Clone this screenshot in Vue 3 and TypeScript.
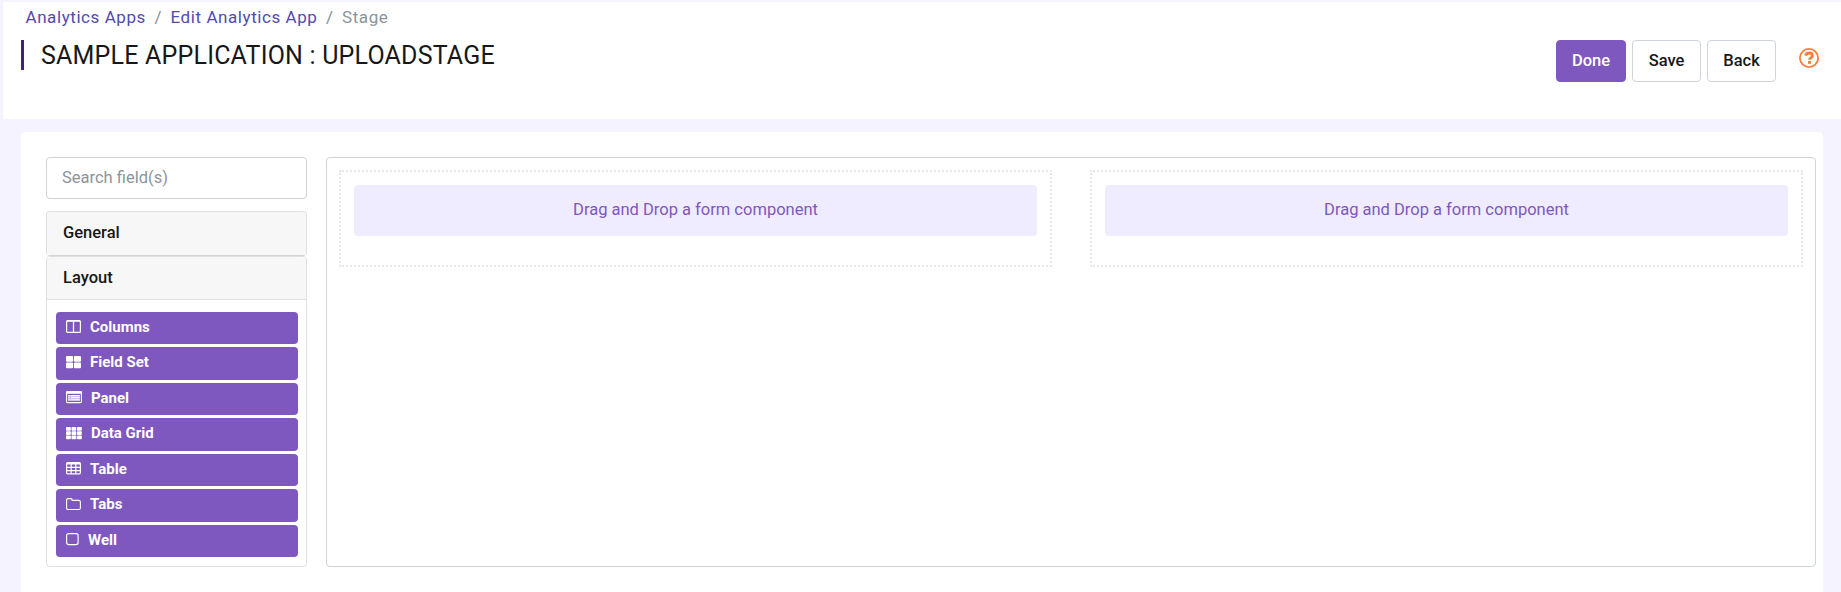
<script setup lang="ts">
interface LayoutItem {
  label: string
  icon: string
  width: number
}

const layoutItems: LayoutItem[] = [
  { label: 'Columns', icon: 'columns', width: 15 },
  { label: 'Field Set', icon: 'fieldset', width: 15 },
  { label: 'Panel', icon: 'panel', width: 16 },
  { label: 'Data Grid', icon: 'grid', width: 16 },
  { label: 'Table', icon: 'table', width: 15 },
  { label: 'Tabs', icon: 'folder', width: 15 },
  { label: 'Well', icon: 'well', width: 13 },
]
const dropZones: string[] = ['left', 'right']
</script>

<template>
  <div class="page">
    <header class="header">
      <div class="heading">
        <nav class="crumbs">
          <a class="link">Analytics Apps</a><span class="sep">/</span><a class="link">Edit Analytics App</a><span class="sep">/</span><span class="current">Stage</span>
        </nav>
        <h1 class="title"><span class="title-text">SAMPLE APPLICATION : UPLOADSTAGE</span></h1>
      </div>
      <div class="actions">
        <button class="btn primary">Done</button>
        <button class="btn">Save</button>
        <button class="btn">Back</button>
        <svg class="help" width="20" height="20" viewBox="0 0 20 20" fill="none" stroke="#fb7d3b">
          <circle cx="10" cy="10" r="9.1" stroke-width="1.8" />
          <path d="M6.6 7.6C7 5.9 8.3 5 10 5c2 0 3.4 1.1 3.4 2.7 0 2.2-2.9 2-2.9 4.1" stroke-width="2.8" />
          <path d="M9 13h3v2.8H9z" fill="#fb7d3b" stroke="none" />
        </svg>
      </div>
    </header>

    <main class="card">
      <aside class="sidebar">
        <input class="search" type="text" placeholder="Search field(s)" />
        <div class="group general"><div class="group-title">General</div></div>
        <div class="group layout">
          <div class="group-title">Layout</div>
          <div class="items">
            <div v-for="item in layoutItems" :key="item.label" class="item">
              <svg class="icon" :width="item.width" height="15" :viewBox="`0 0 ${item.width} 15`" fill="none" stroke="#fff">
                <template v-if="item.icon === 'columns'">
                  <rect x=".6" y="1.6" width="13.8" height="11.8" rx="1" stroke-width="1.2" />
                  <path d="M1 2h13M7.5 2v11" stroke-width="1.3" />
                </template>
                <g v-else-if="item.icon === 'fieldset'" fill="#fff" stroke="none">
                  <rect x="0" y="1" width="7.1" height="5.8" rx="1" /><rect x="7.9" y="1" width="7.1" height="5.8" rx="1" />
                  <rect x="0" y="7.5" width="7.1" height="5.8" rx="1" /><rect x="7.9" y="7.5" width="7.1" height="5.8" rx="1" />
                </g>
                <template v-else-if="item.icon === 'panel'">
                  <rect x=".6" y="1.6" width="14.8" height="11" rx=".8" stroke-width="1.1" />
                  <path d="M0 1.5h16v2.3H0z" fill="#fff" stroke="none" />
                  <path d="M2.3 5.6h1.5M4.7 5.6h9M2.3 7.7h1.5M4.7 7.7h9M2.3 9.8h1.5M4.7 9.8h9" stroke-width="1.1" />
                  <path d="M2 5h12v6H2z" fill="#fff" fill-opacity=".55" stroke="none" />
                </template>
                <g v-else-if="item.icon === 'grid'" fill="#fff" stroke="none">
                  <template v-for="row in 3" :key="row">
                    <rect v-for="col in 3" :key="col" :x="(col - 1) * 5.5" :y="row * 4.3 - 3.3" width="4.8" height="3.7" rx=".7" />
                  </template>
                </g>
                <template v-else-if="item.icon === 'table'">
                  <rect x=".6" y="1.6" width="13.8" height="11.2" rx="1" stroke-width="1.2" />
                  <path d="M1 2.5h13" stroke-width="2" />
                  <path d="M1 6.3h13M1 9.6h13M5.2 3v10M9.8 3v10" stroke-width="1.2" />
                </template>
                <path v-else-if="item.icon === 'folder'" d="M.6 3.2Q.6 1.6 2.2 1.6h2.6Q6.2 1.6 6.2 3.4h6.6q1.6 0 1.6 1.5v6q0 1.6-1.6 1.6H2.2Q.6 12.5.6 10.9z" stroke-width="1.1" />
                <rect v-else x=".6" y="1.6" width="11.5" height="11" rx="2" stroke-width="1.2" />
              </svg>
              <span>{{ item.label }}</span>
            </div>
          </div>
        </div>
      </aside>

      <section class="canvas">
        <div v-for="zone in dropZones" :key="zone" class="zone">
          <div class="drop"><span>Drag and Drop a form component</span></div>
        </div>
      </section>
    </main>
  </div>
</template>

<style>
body {
  background: #f5f3ff;
  overflow: hidden;
}
</style>

<style scoped>
* {
  box-sizing: border-box;
}
.page {
  height: 592px;
  padding-top: 2px;
  display: flex;
  flex-direction: column;
  font-family: Roboto, "Liberation Sans", sans-serif;
  font-size: 16px;
  color: #171717;
  background: #f5f3ff;
}
.header {
  height: 117px;
  flex: none;
  margin-left: 3px;
  padding: 0 22px 0 18px;
  display: flex;
  justify-content: space-between;
  background: #fff;
}
.crumbs {
  height: 30px;
  margin: 0 0 8px 4.5px;
  display: flex;
  line-height: 30px;
  font-size: 17px;
  letter-spacing: 0.57px;
  white-space: pre;
}
.link {
  color: #534ab0;
}
.sep {
  margin: 0 8.5px;
  color: #868e96;
}
.current {
  color: #8c949b;
}
.title {
  height: 30px;
  margin: 0;
  padding-left: 17px;
  border-left: 3px solid #3d2383;
  font-weight: 400;
  font-size: 25px;
  line-height: 32px;
  letter-spacing: 0.2px;
  white-space: nowrap;
}
.actions {
  display: flex;
  gap: 6px;
  padding-top: 38px;
}
.btn {
  width: 69px;
  height: 42px;
  padding: 0;
  border: 1px solid #ced4da;
  border-radius: 4px;
  background: #fff;
  color: #171717;
  font: 500 16.5px/40px Roboto, sans-serif;
}
.btn.primary {
  width: 70px;
  border-color: #7e57bf;
  background: #7e57bf;
  color: #fff;
}
.help {
  margin: 8px 0 0 17px;
}
.card {
  flex: 1;
  margin: 13px 18px 0 21px;
  padding: 25px 7px 25px 25px;
  display: flex;
  gap: 19px;
  background: #fff;
  border-radius: 4px 4px 0 0;
}
.sidebar {
  width: 261px;
  flex: none;
  display: flex;
  flex-direction: column;
}
.search {
  width: 100%;
  height: 42px;
  flex: none;
  margin-bottom: 12px;
  padding: 0 15px 2px;
  border: 1px solid #ced4da;
  border-radius: 4px;
  font: 400 16.5px Roboto, sans-serif;
  outline: none;
}
.search::placeholder {
  color: #8c949b;
  opacity: 1;
}
.group {
  border: 1px solid #dfdfdf;
  border-radius: 4px;
}
.group-title {
  height: 43px;
  padding-left: 16px;
  line-height: 42px;
  font-size: 16.5px;
  font-weight: 500;
  background: #f7f7f7;
  border-radius: 3px 3px 0 0;
}
.general {
  height: 45px;
  border-bottom: 2px solid #d4d4d4;
}
.layout {
  height: 311px;
}
.layout .group-title {
  border-bottom: 1px solid #dfdfdf;
}
.items {
  padding: 12px 8px 0 9px;
  display: flex;
  flex-direction: column;
  gap: 3.2px;
}
.item {
  height: 32.3px;
  padding: 0 0 3px 10px;
  display: flex;
  align-items: center;
  background: #7e57bf;
  border-radius: 4px;
  color: #fff;
  font-size: 15px;
  font-weight: 700;
}
.icon {
  margin-right: 9px;
}
.canvas {
  flex: 1;
  padding: 12px;
  display: flex;
  align-items: flex-start;
  gap: 38px;
  border: 1px solid #ced4da;
  border-radius: 4px;
}
.zone {
  flex: 1;
  height: 97px;
  padding: 13px;
  border: 2px dotted #e8e8e8;
}
.drop {
  height: 51px;
  line-height: 50px;
  text-align: center;
  font-size: 16.5px;
  color: #7e57bf;
  background: #f0ecff;
  border-radius: 4px;
}
</style>
